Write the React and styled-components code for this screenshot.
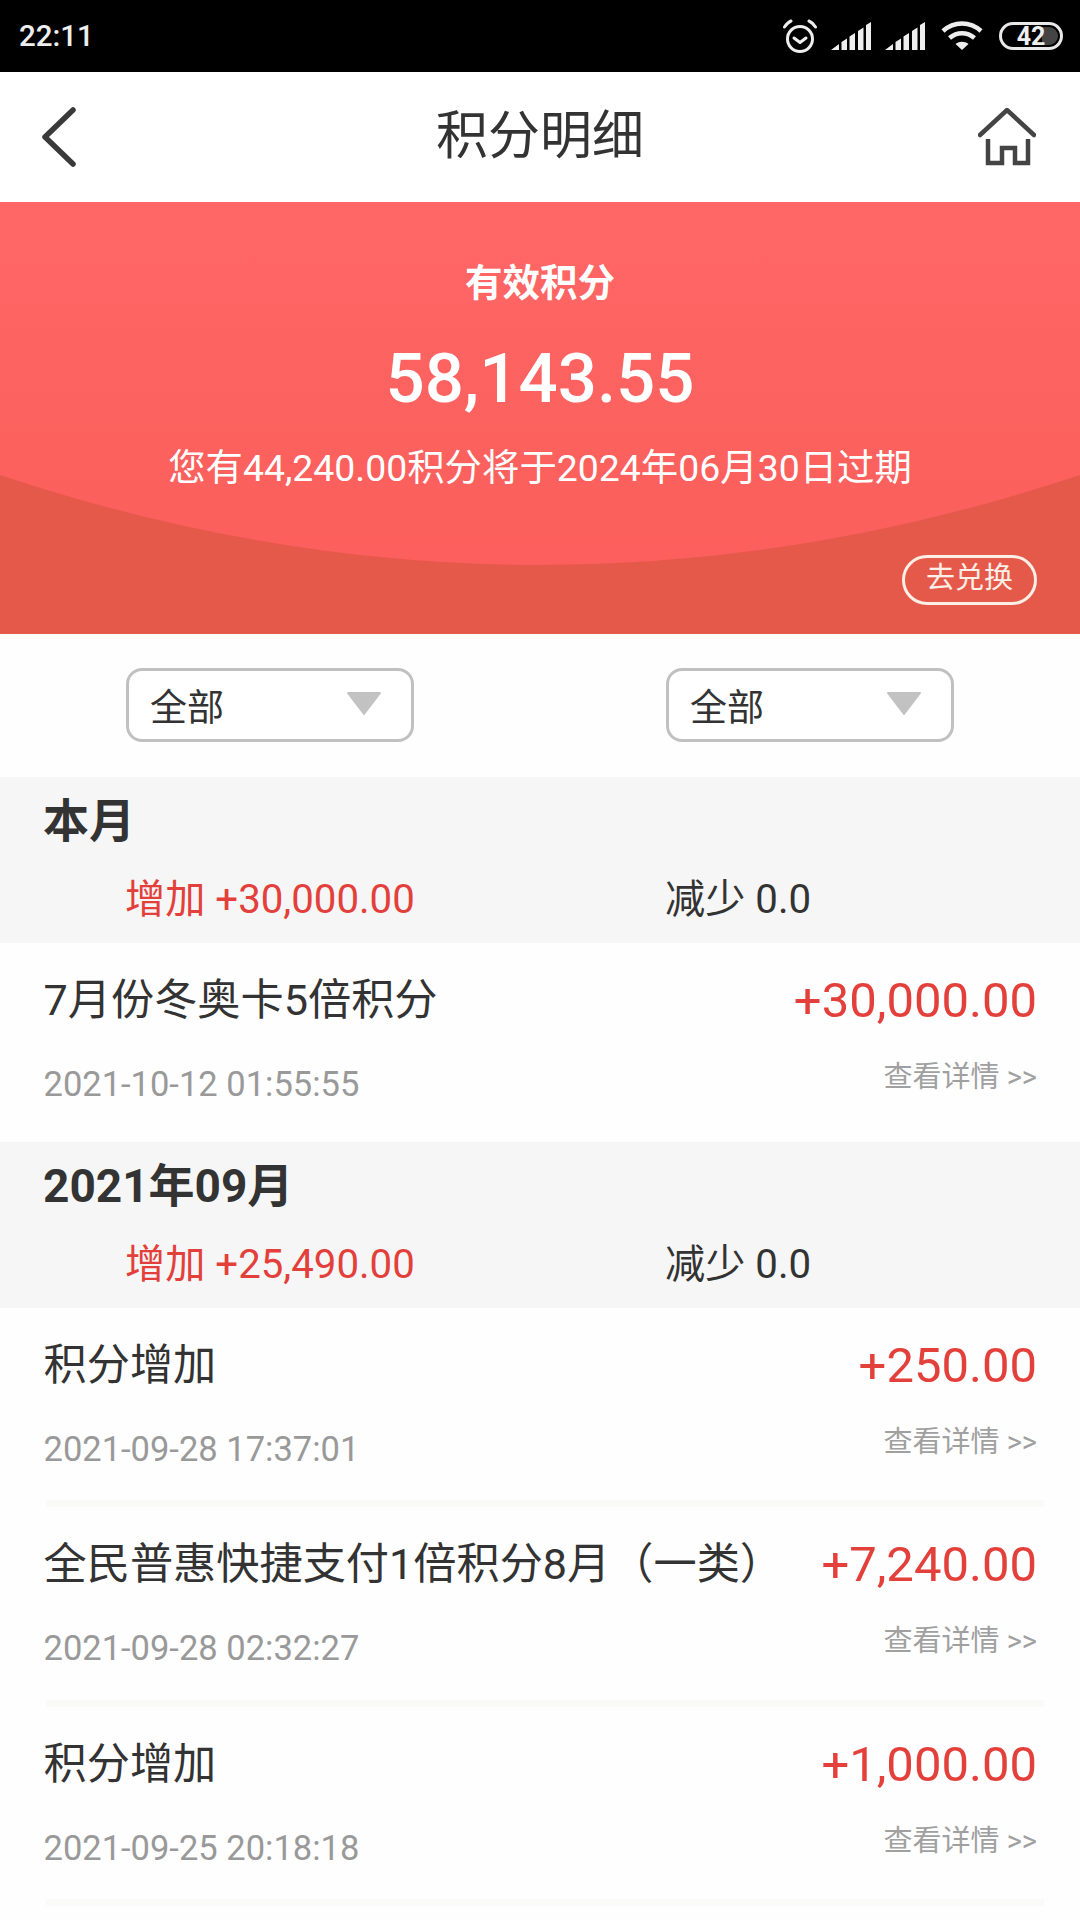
import React from "react";
import styled, { createGlobalStyle } from "styled-components";

const Global = createGlobalStyle`
  html, body { margin: 0; padding: 0; background: #fefefe; }
  * { box-sizing: border-box; }
  body { font-family: Roboto, "Noto Sans CJK SC", sans-serif; color: #333; }
`;

const Page = styled.div`
  width: 1080px;
  height: 1920px;
  overflow: hidden;
  background: #fefefe;
`;

const StatusBar = styled.div`
  height: 72px;
  background: #000;
  color: #eee;
  display: flex;
  align-items: center;
  justify-content: space-between;
  padding: 0 17px 0 19px;
`;
const Clock = styled.span`
  font-size: 29.5px;
  font-weight: 500;
`;
const StatusIcons = styled.div`
  display: flex;
  align-items: center;
  gap: 14px;
`;
const WifiIcon = styled.svg`
  margin: 0 2px;
`;
const BatteryBox = styled.div`
  position: relative;
  width: 64px;
  height: 28px;
  border: 3px solid #e8e8e8;
  border-radius: 14px;
  display: flex;
  align-items: center;
  justify-content: center;
  overflow: hidden;
  color: #eee;
  font-size: 25px;
  font-weight: 700;
  line-height: 1;
  &::after {
    content: "";
    position: absolute;
    right: 2px;
    top: 2px;
    bottom: 2px;
    width: 16px;
    border-radius: 0 10px 10px 0;
    background: #444;
  }
`;
const BatteryLabel = styled.span`
  position: relative;
  z-index: 1;
`;

const NavBar = styled.header`
  height: 130px;
  background: #fff;
  display: flex;
  align-items: center;
  justify-content: space-between;
  padding: 0 44px 0 41px;
  position: relative;
`;
const NavTitle = styled.h1`
  position: absolute;
  left: 0;
  right: 0;
  top: 33px;
  margin: 0;
  text-align: center;
  font-size: 52px;
  line-height: 64px;
  font-weight: 400;
  color: #333;
`;

const Hero = styled.section`
  position: relative;
  height: 432px;
  background: linear-gradient(#ff6767 0, #fc625f 45%, #fc5e5c 100%);
  color: #fff;
  text-align: center;
  overflow: hidden;
  padding-top: 57px;
`;
const HeroWave = styled.svg`
  position: absolute;
  left: 0;
  top: 0;
  width: 1080px;
  height: 432px;
`;
const HeroLabel = styled.div`
  position: relative;
  font-size: 37.5px;
  line-height: 48px;
  font-weight: 700;
`;
const HeroValue = styled.div`
  position: relative;
  font-size: 69px;
  line-height: 80px;
  margin-top: 32px;
  font-weight: 500;
`;
const HeroNote = styled.div`
  position: relative;
  font-size: 37.4px;
  line-height: 48px;
  margin-top: 25px;
  font-weight: 400;
`;
const RedeemButton = styled.div`
  position: absolute;
  right: 43px;
  bottom: 29px;
  width: 135px;
  height: 50px;
  border: 3px solid #fdeee6;
  border-radius: 25px;
  font-size: 29px;
  line-height: 40px;
  color: #fdeee6;
`;

const FilterBar = styled.div`
  height: 143px;
  display: flex;
  padding: 34px 0 0 126px;
  gap: 252px;
`;
const Select = styled.div`
  width: 288px;
  height: 74px;
  border: 3px solid #c0c0c0;
  border-radius: 16px;
  background: #fff;
  display: flex;
  align-items: center;
  justify-content: space-between;
  padding: 0 29px 0 21px;
  font-size: 37px;
  color: #333;
`;
const Caret = styled.svg`
  width: 36px;
  height: 24px;
  margin-top: -4px;
`;

const GroupHeader = styled.div`
  height: 165.5px;
  background: #f6f6f6;
  padding: 12px 0 0 44px;
`;
const GroupTitle = styled.div`
  font-size: 46px;
  line-height: 64px;
  font-weight: 700;
  color: #333;
  margin-left: -1px;
`;
const GroupStats = styled.div`
  display: flex;
  margin-top: 22px;
  padding-left: 81px;
  font-size: 40.2px;
  line-height: 50px;
`;
const Stat = styled.span`
  flex: none;
  width: 540px;
  color: ${(p) => (p.$up ? "#e3403b" : "#333")};
`;

const Row = styled.div`
  height: 199.5px;
  display: grid;
  grid-template-columns: 1fr auto;
  grid-template-rows: 60px 1fr;
  padding: 28px 43px 0 43.5px;
  position: relative;
  &::after {
    content: "";
    display: ${(p) => (p.$sep ? "block" : "none")};
    position: absolute;
    left: 46px;
    right: 36px;
    bottom: 0;
    height: 7px;
    background: #fafaf9;
  }
`;
const RowTitle = styled.div`
  font-size: 43.2px;
  line-height: 60px;
  color: #333;
  white-space: nowrap;
`;
const RowAmount = styled.div`
  font-size: 49px;
  line-height: 60px;
  color: #e3403b;
  text-align: right;
`;
const RowDate = styled.div`
  font-size: 34.5px;
  line-height: 44px;
  color: #999;
  margin-top: 31px;
`;
const RowLink = styled.div`
  font-size: 29px;
  line-height: 40px;
  color: #a0a0a0;
  text-align: right;
  margin-top: 26px;
`;

const Alarm = () => (
  <svg width="34" height="34" viewBox="0 0 34 34" fill="none" stroke="#eee" strokeWidth="3" strokeLinecap="round" strokeLinejoin="round">
    <circle cx="17" cy="20" r="12.5" />
    <path d="M11 19l6 4.5 6-4.5" />
    <path d="M1.5 8c2-3 4-5 6.5-6M32.5 8c-2-3-4-5-6.5-6" />
  </svg>
);

const Signal = () => (
  <svg width="40" height="30" viewBox="0 0 40 30" fill="#eee">
    <path d="M0 29l8-6v6zM10.5 21l5.5-3.5V29h-5.5zM18.5 15.5l5.5-3.5v17h-5.5zM27 10l5.500-3.500V29H27zM35 4l5-3v28h-5z" />
  </svg>
);

const Wifi = () => (
  <WifiIcon width="42" height="30" viewBox="0 0 42 30" fill="none" stroke="#eee" strokeWidth="4.5">
    <path d="M2 10C13 0 29 0 40 10" />
    <path d="M8.5 17C16 10.5 26 10.5 33.5 17" />
    <path d="M21 29l-6.5-6c3.8-3 9.2-3 13 0z" fill="#eee" stroke="none" />
  </WifiIcon>
);

const BackIcon = () => (
  <svg width="36" height="60" viewBox="0 0 36 60" fill="none" stroke="#3a3a3a" strokeWidth="5.5" strokeLinecap="round" strokeLinejoin="round">
    <path d="M32 3L4 30l28 27" />
  </svg>
);

const HomeIcon = () => (
  <svg width="58" height="58" viewBox="0 0 58 58" fill="none" stroke="#444" strokeWidth="4.5" strokeLinecap="round" strokeLinejoin="miter">
    <path d="M2 27L29 2l27 25" />
    <path d="M10 31v24h14V40h13v15h13V31" strokeLinecap="butt" />
  </svg>
);

const groups = [
  {
    title: "本月",
    up: "增加 +30,000.00",
    down: "减少 0.0",
    rows: [{ t: "7月份冬奥卡5倍积分", a: "+30,000.00", d: "2021-10-12 01:55:55" }],
  },
  {
    title: "2021年09月",
    up: "增加 +25,490.00",
    down: "减少 0.0",
    rows: [
      { t: "积分增加", a: "+250.00", d: "2021-09-28 17:37:01", sep: true },
      { t: "全民普惠快捷支付1倍积分8月（一类）", a: "+7,240.00", d: "2021-09-28 02:32:27", sep: true },
      { t: "积分增加", a: "+1,000.00", d: "2021-09-25 20:18:18", sep: true },
    ],
  },
];

export default function App() {
  return (
    <Page>
      <Global />
      <StatusBar>
        <Clock>22:11</Clock>
        <StatusIcons>
          <Alarm />
          <Signal />
          <Signal />
          <Wifi />
          <BatteryBox>
            <BatteryLabel>42</BatteryLabel>
          </BatteryBox>
        </StatusIcons>
      </StatusBar>
      <NavBar>
        <BackIcon />
        <NavTitle>积分明细</NavTitle>
        <HomeIcon />
      </NavBar>
      <Hero>
        <HeroWave viewBox="0 0 1080 432" preserveAspectRatio="none">
          <path d="M0 273Q540 453 1080 273V432H0Z" fill="#e5594b" />
        </HeroWave>
        <HeroLabel>有效积分</HeroLabel>
        <HeroValue>58,143.55</HeroValue>
        <HeroNote>您有44,240.00积分将于2024年06月30日过期</HeroNote>
        <RedeemButton>去兑换</RedeemButton>
      </Hero>
      <FilterBar>
        {[0, 1].map((i) => (
          <Select key={i}>
            全部
            <Caret viewBox="0 0 36 24">
              <path d="M2 2h32L18 23z" fill="#c2c2c2" stroke="#c2c2c2" strokeWidth="2" strokeLinejoin="round" />
            </Caret>
          </Select>
        ))}
      </FilterBar>
      {groups.map((g) => (
        <section key={g.title}>
          <GroupHeader>
            <GroupTitle>{g.title}</GroupTitle>
            <GroupStats>
              <Stat $up>{g.up}</Stat>
              <Stat>{g.down}</Stat>
            </GroupStats>
          </GroupHeader>
          {g.rows.map((r) => (
            <Row key={r.d} $sep={r.sep}>
              <RowTitle>{r.t}</RowTitle>
              <RowAmount>{r.a}</RowAmount>
              <RowDate>{r.d}</RowDate>
              <RowLink>查看详情 &gt;&gt;</RowLink>
            </Row>
          ))}
        </section>
      ))}
    </Page>
  );
}
